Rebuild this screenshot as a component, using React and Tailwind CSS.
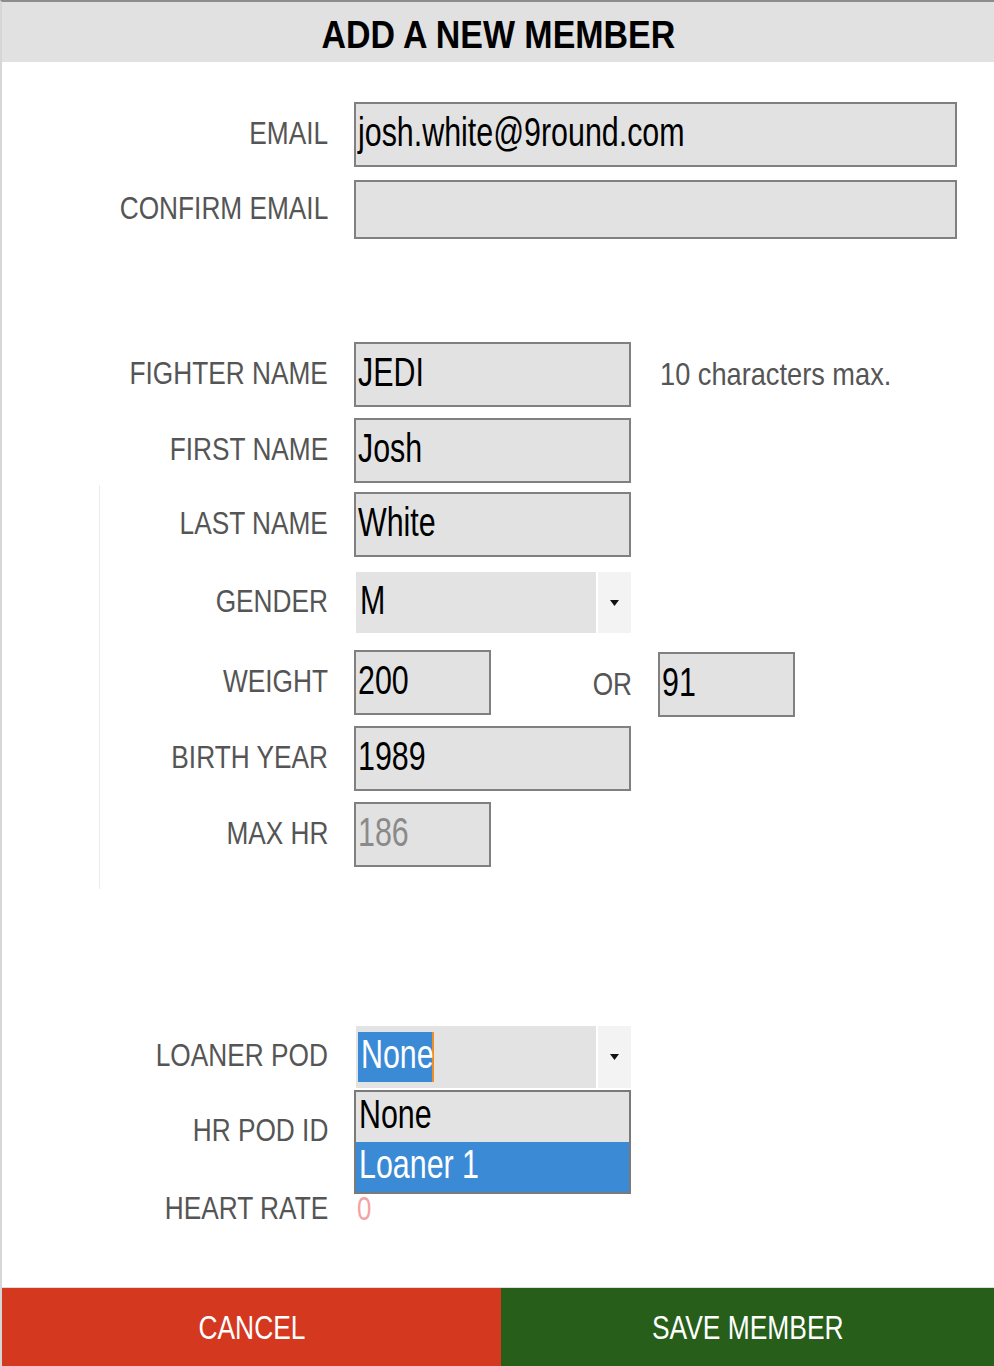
import React from 'react';

// condensed text: Liberation Sans squeezed horizontally
const Cond = ({ children, scale = 'scale-x-[0.82]', right = false, className = '' }) => (
  <span className={`inline-block whitespace-nowrap ${right ? 'origin-right' : 'origin-left'} ${scale} ${className}`}>
    {children}
  </span>
);

const Label = ({ children, width = 'w-[326px]' }) => (
  <div className={`${width} shrink-0 text-right text-[32px] leading-none text-[#555] pb-[4px]`}>
    <Cond right>{children}</Cond>
  </div>
);

const Box = ({ value, width, height = 'h-[65px]', muted = false }) => (
  <div
    className={`${width} ${height} shrink-0 border-2 border-[#808080] bg-[#e2e2e2] flex items-center pl-[2px] pb-[6px] text-[40px] leading-none ${
      muted ? 'text-[#8a8a8a]' : 'text-black'
    }`}
  >
    <Cond scale="scale-x-[0.76]">{value}</Cond>
  </div>
);

const Arrow = () => (
  <div className="w-[33px] h-full bg-[#f3f3f3] flex items-center justify-center">
    <svg width="9" height="6" viewBox="0 0 9 6">
      <path d="M0 0 L9 0 L4.5 6 Z" fill="#111" />
    </svg>
  </div>
);

const Row = ({ label, labelWidth, className = '', children }) => (
  <div className={`flex items-center ${className}`}>
    <Label width={labelWidth}>{label}</Label>
    <div className="ml-[26px] flex items-center">{children}</div>
  </div>
);

export default function App() {
  const inner = 'w-[228px]';

  return (
    <div className="min-h-screen flex flex-col bg-white border-t-2 border-t-[#8c8c8c] border-l-2 border-l-[#d6d6d6] font-['Liberation_Sans',Arial,sans-serif]">
      {/* Header */}
      <div className="h-[60px] bg-[#e1e1e1] flex items-center justify-center">
        <h1 className="text-[39px] font-bold leading-none text-black pt-1 text-center">
          <span className="inline-block scale-x-[0.87]">ADD A NEW MEMBER</span>
        </h1>
      </div>

      <div className="flex-1 flex flex-col">
        {/* Email */}
        <Row label="EMAIL" className="mt-[40px]">
          <Box value="josh.white@9round.com" width="w-[603px]" />
        </Row>
        <Row label="CONFIRM EMAIL" className="mt-[13px]">
          <Box value="" width="w-[603px]" height="h-[59px]" />
        </Row>

        {/* Fighter */}
        <Row label="FIGHTER NAME" className="mt-[103px]">
          <Box value="JEDI" width="w-[277px]" />
          <span className="ml-[29px] pb-[2px] text-[32px] leading-none text-[#555]">
            <Cond scale="scale-x-[0.85]">10 characters max.</Cond>
          </span>
        </Row>
        <Row label="FIRST NAME" className="mt-[11px]">
          <Box value="Josh" width="w-[277px]" />
        </Row>

        <div className="mt-[2px] ml-[97px] border-l border-[#ececec] pt-[7px] pb-[22px]">
          <Row label="LAST NAME" labelWidth={inner}>
            <Box value="White" width="w-[277px]" />
          </Row>
          <Row label="GENDER" labelWidth={inner} className="mt-[15px]">
            <div className="ml-[2px] w-[275px] h-[61px] flex bg-[#e3e3e3]">
              <div className="flex-1 flex items-center pl-[4px] pb-[6px] text-[40px] leading-none text-black">
                <Cond scale="scale-x-[0.76]">M</Cond>
              </div>
              <div className="w-[2px] bg-white" />
              <Arrow />
            </div>
          </Row>
          <Row label="WEIGHT" labelWidth={inner} className="mt-[15px]">
            <Box value="200" width="w-[137px]" />
            <div className="w-[141px] text-right text-[32px] leading-none text-[#555] mt-[2px]">
              <Cond right>OR</Cond>
            </div>
            <div className="ml-[26px] mt-[4px]">
              <Box value="91" width="w-[137px]" />
            </div>
          </Row>
          <Row label="BIRTH YEAR" labelWidth={inner} className="mt-[9px]">
            <Box value="1989" width="w-[277px]" />
          </Row>
          <Row label="MAX HR" labelWidth={inner} className="mt-[11px]">
            <Box value="186" width="w-[137px]" muted />
          </Row>
        </div>

        {/* Loaner pod */}
        <Row label="LOANER POD" className="mt-[137px]">
          <div className="relative ml-[2px] w-[275px] h-[62px] flex bg-[#e3e3e3]">
            <div className="flex-1 flex items-center pl-[2px]">
              <span className="w-[76px] h-[50px] flex items-center pl-[3px] pb-[6px] bg-[#3a8ad6] text-white text-[40px] leading-none border-r-2 border-[#f08c28]">
                <Cond scale="scale-x-[0.76]">None</Cond>
              </span>
            </div>
            <div className="w-[2px] bg-white" />
            <Arrow />
            {/* Dropdown menu */}
            <div className="absolute left-[-2px] top-[64px] w-[277px] border-2 border-[#7a7a7a] bg-[#e3e3e3] z-10">
              <div className="h-[50px] flex items-center pl-[3px] pb-[6px] text-[40px] leading-none text-black">
                <Cond scale="scale-x-[0.76]">None</Cond>
              </div>
              <div className="h-[50px] flex items-center pl-[3px] pb-[6px] text-[40px] leading-none text-white bg-[#3a8ad6]">
                <Cond scale="scale-x-[0.76]">Loaner 1</Cond>
              </div>
            </div>
          </div>
        </Row>
        <Row label="HR POD ID" className="mt-[12px] h-[64px]">
          <span />
        </Row>
        <Row label="HEART RATE" className="mt-[14px] h-[64px]">
          <span className="ml-[3px] pb-[4px] text-[34px] leading-none text-[#f3a3a3]">
            <Cond scale="scale-x-[0.76]">0</Cond>
          </span>
        </Row>
      </div>

      {/* Footer */}
      <div className="h-[79px] flex border-t border-[#dcdcdc]">
        <button className="w-[499px] bg-[#d4381f] text-white text-[33px] leading-none flex items-center justify-center">
          <span className="inline-block scale-x-[0.8]">CANCEL</span>
        </button>
        <button className="flex-1 bg-[#265e1a] text-white text-[33px] leading-none flex items-center justify-center">
          <span className="inline-block scale-x-[0.8]">SAVE MEMBER</span>
        </button>
      </div>
    </div>
  );
}
